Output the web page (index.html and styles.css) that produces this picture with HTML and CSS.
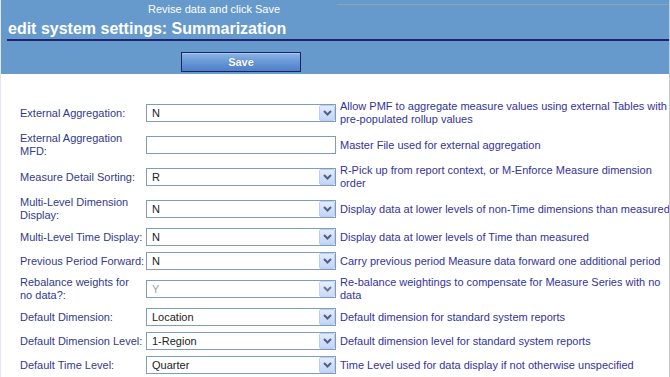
FILE: index.html
```html
<!DOCTYPE html>
<html>
<head>
<meta charset="utf-8">
<title>edit system settings: Summarization</title>
<link rel="stylesheet" href="styles.css">
</head>
<body>
<div class="page">
  <div class="header">
    <div class="hint-row"><span class="hint">Revise data and click Save</span><span class="hint-rule"></span></div>
    <h1 class="title">edit system settings: Summarization</h1>
    <div class="actions"><button class="save" type="button">Save</button></div>
  </div>

  <div class="settings">
    <div class="label">External Aggregation:</div>
    <div class="field"><div class="combo"><span class="value">N</span><span class="drop"><svg width="9" height="6" viewBox="0 0 9 6"><path d="M1 1 L4.5 4.5 L8 1" fill="none" stroke="#4d6185" stroke-width="2"/></svg></span></div></div>
    <div class="desc">Allow PMF to aggregate measure values using external Tables with<br>pre-populated rollup values</div>

    <div class="label">External Aggregation<br>MFD:</div>
    <div class="field"><input class="text-input" type="text" value=""></div>
    <div class="desc">Master File used for external aggregation</div>

    <div class="label">Measure Detail Sorting:</div>
    <div class="field"><div class="combo"><span class="value">R</span><span class="drop"><svg width="9" height="6" viewBox="0 0 9 6"><path d="M1 1 L4.5 4.5 L8 1" fill="none" stroke="#4d6185" stroke-width="2"/></svg></span></div></div>
    <div class="desc">R-Pick up from report context, or M-Enforce Measure dimension<br>order</div>

    <div class="label">Multi-Level Dimension<br>Display:</div>
    <div class="field"><div class="combo"><span class="value">N</span><span class="drop"><svg width="9" height="6" viewBox="0 0 9 6"><path d="M1 1 L4.5 4.5 L8 1" fill="none" stroke="#4d6185" stroke-width="2"/></svg></span></div></div>
    <div class="desc">Display data at lower levels of non-Time dimensions than measured</div>

    <div class="label">Multi-Level Time Display:</div>
    <div class="field"><div class="combo"><span class="value">N</span><span class="drop"><svg width="9" height="6" viewBox="0 0 9 6"><path d="M1 1 L4.5 4.5 L8 1" fill="none" stroke="#4d6185" stroke-width="2"/></svg></span></div></div>
    <div class="desc">Display data at lower levels of Time than measured</div>

    <div class="label">Previous Period Forward:</div>
    <div class="field"><div class="combo"><span class="value">N</span><span class="drop"><svg width="9" height="6" viewBox="0 0 9 6"><path d="M1 1 L4.5 4.5 L8 1" fill="none" stroke="#4d6185" stroke-width="2"/></svg></span></div></div>
    <div class="desc">Carry previous period Measure data forward one additional period</div>

    <div class="label">Rebalance weights for<br>no data?:</div>
    <div class="field"><div class="combo is-disabled"><span class="value">Y</span><span class="drop"><svg width="9" height="6" viewBox="0 0 9 6"><path d="M1 1 L4.5 4.5 L8 1" fill="none" stroke="#4d6185" stroke-width="2"/></svg></span></div></div>
    <div class="desc">Re-balance weightings to compensate for Measure Series with no<br>data</div>

    <div class="label">Default Dimension:</div>
    <div class="field"><div class="combo"><span class="value">Location</span><span class="drop"><svg width="9" height="6" viewBox="0 0 9 6"><path d="M1 1 L4.5 4.5 L8 1" fill="none" stroke="#4d6185" stroke-width="2"/></svg></span></div></div>
    <div class="desc">Default dimension for standard system reports</div>

    <div class="label">Default Dimension Level:</div>
    <div class="field"><div class="combo"><span class="value">1-Region</span><span class="drop"><svg width="9" height="6" viewBox="0 0 9 6"><path d="M1 1 L4.5 4.5 L8 1" fill="none" stroke="#4d6185" stroke-width="2"/></svg></span></div></div>
    <div class="desc">Default dimension level for standard system reports</div>

    <div class="label">Default Time Level:</div>
    <div class="field"><div class="combo"><span class="value">Quarter</span><span class="drop"><svg width="9" height="6" viewBox="0 0 9 6"><path d="M1 1 L4.5 4.5 L8 1" fill="none" stroke="#4d6185" stroke-width="2"/></svg></span></div></div>
    <div class="desc">Time Level used for data display if not otherwise unspecified</div>
  </div>
</div>
</body>
</html>
```

FILE: styles.css
```css
html, body {
  margin: 0;
  padding: 0;
  background: #ffffff;
  font-family: "Liberation Sans", Arial, sans-serif;
}

.page {
  width: 668px;
  min-height: 377px;
  border-right: 1px solid #c9c9c9;
  border-left: 1px solid #e4e6f4;
  overflow: hidden;
}

/* ---------- header ---------- */
.header {
  background: #6699cc;
  height: 74px;
  box-sizing: border-box;
  padding-top: 3px;
  overflow: hidden;
}

.hint-row {
  display: flex;
  align-items: flex-start;
  height: 13px;
}

.hint {
  margin-left: 147px;
  font-size: 11px;
  line-height: 13px;
  color: #ffffff;
  white-space: nowrap;
}

.hint-rule {
  flex: 1;
  margin-left: 57px;
  margin-top: 1px;
  border-top: 1px solid #8ea3ad;
}

.title {
  margin: 3px 0 0 6px;
  padding-left: 1px;
  font-size: 16px;
  line-height: 20px;
  font-weight: bold;
  color: #ffffff;
  border-bottom: 2px solid #1f2370;
}

.actions {
  margin-top: 11px;
  padding-left: 180px;
}

.save {
  display: block;
  width: 120px;
  height: 20px;
  padding: 0;
  border: 1px solid #1b2266;
  background: linear-gradient(#8db5e6 0%, #6a9ad8 45%, #4f80c6 100%);
  box-shadow: inset 0 1px 0 #a9c8ee;
  color: #ffffff;
  font-family: "Liberation Sans", Arial, sans-serif;
  font-size: 11px;
  font-weight: bold;
  text-shadow: 0 0 1px #3a5f99;
}

/* ---------- settings grid ---------- */
.settings {
  display: grid;
  grid-template-columns: 126px 194px 327px;
  align-items: center;
  padding-left: 19px;
  margin-top: 23px;
  font-size: 11px;
  line-height: 13px;
}

.label {
  padding: 3px 0;
  color: #333a8a;
  white-space: nowrap;
}

.field {
  padding: 3px 0;
}

.desc {
  padding: 3px 0;
  color: #33339a;
  white-space: nowrap;
}

.combo {
  box-sizing: border-box;
  width: 190px;
  height: 18px;
  border: 1px solid #7f9db9;
  background: #ffffff;
  display: flex;
  align-items: center;
  justify-content: space-between;
}

.value {
  padding-left: 5px;
  color: #222222;
}

.drop {
  box-sizing: border-box;
  width: 16px;
  height: 16px;
  border: 1px solid #bccdf3;
  border-radius: 2px;
  background: linear-gradient(#e3ebfd, #c3d4f8);
  display: flex;
  align-items: center;
  justify-content: center;
}

.combo.is-disabled .value {
  color: #a2a2a2;
}

.combo.is-disabled .drop {
  opacity: 0.85;
}

.text-input {
  display: block;
  box-sizing: border-box;
  width: 190px;
  height: 18px;
  margin: 0;
  padding: 0 4px;
  border: 1px solid #7f9db9;
  background: #ffffff;
  font-family: "Liberation Sans", Arial, sans-serif;
  font-size: 11px;
}
```
